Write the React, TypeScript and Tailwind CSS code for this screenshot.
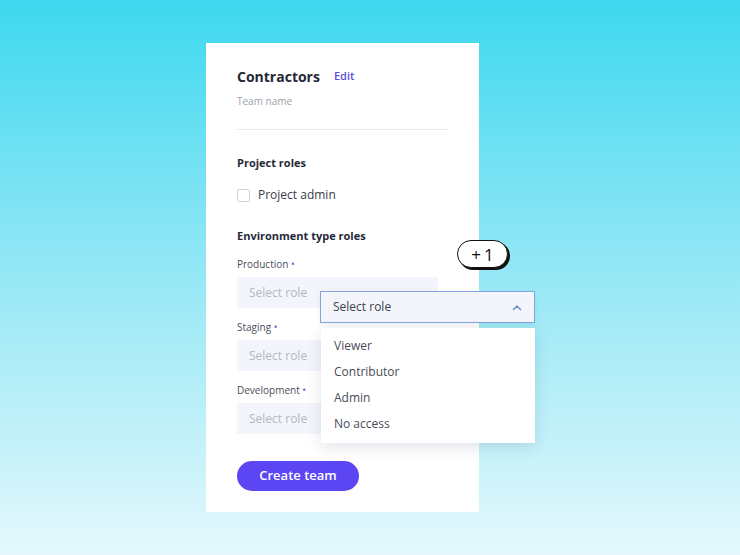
import React from "react";

const font = { fontFamily: '"Open Sans", "Noto Sans", sans-serif' };

function Field({ label }: { label: string }) {
  return (
    <div className="flex flex-col">
      <div className="text-[10px] leading-[14px] text-[#4b4d5a] font-medium">
        {label} <span className="text-[#6d5ce8]">•</span>
      </div>
      <div className="mt-[6px] h-[31px] w-[201px] bg-[#f3f5fa] flex items-center pl-[12px] text-[12px] text-[#b3b7c2]">
        Select role
      </div>
    </div>
  );
}

export default function App() {
  return (
    <div
      style={font}
      className="relative w-[740px] h-[555px] overflow-hidden bg-[linear-gradient(180deg,#3dd8ef_0%,#8ee6f5_45%,#e4f8fc_100%)]"
    >
      <div className="absolute left-[206px] top-[43px] w-[273px] h-[469px] bg-white pl-[31px] pr-[32px] pt-[25px]">
        <div className="flex items-center gap-[14px]">
          <span className="text-[14px] font-bold text-[#262838] leading-[18px]">Contractors</span>
          <span className="text-[11px] font-semibold text-[#5b4de0] leading-[14px] -mt-[3px]">Edit</span>
        </div>
        <div className="mt-[8px] text-[10px] text-[#9da1ab] leading-[14px]">Team name</div>
        <div className="mt-[21px] h-px w-[210px] bg-[#e7e9ee]" />
        <div className="mt-[26px] text-[11px] font-bold text-[#262838] leading-[14px]">Project roles</div>
        <div className="mt-[17px] flex items-center gap-[8px]">
          <div className="w-[13px] h-[13px] border border-[#cfd2d9] rounded-[2px] bg-white" />
          <span className="text-[12px] text-[#3a3c48] leading-[16px]">Project admin</span>
        </div>
        <div className="mt-[26px] text-[11px] font-bold text-[#262838] leading-[14px]">Environment type roles</div>
        <div className="mt-[14px] flex flex-col gap-[12px]">
          <Field label="Production" />
          <Field label="Staging" />
          <Field label="Development" />
        </div>
        <button className="mt-[27px] h-[30px] w-[122px] rounded-full bg-[#5c45f2] text-white text-[13px] font-semibold flex items-center justify-center">
          Create team
        </button>
      </div>

      {/* +1 badge */}
      <div className="absolute left-[457px] top-[240px] w-[51px] h-[28px] rounded-full bg-white border-[1.5px] border-[#111] shadow-[2px_2px_0_#111] flex items-center justify-center gap-[3px] text-[17px] text-[#111] font-medium leading-none">
        <span>+</span>
        <span>1</span>
      </div>

      {/* open select */}
      <div className="absolute left-[320px] top-[291px] w-[215px] h-[32px] bg-[#f3f5fa] border border-[#7fa6df] flex items-center justify-between pl-[12px] pr-[12px] shadow-[0_2px_6px_rgba(0,0,0,0.06)]">
        <span className="text-[12px] text-[#3f414d]">Select role</span>
        <svg width="10" height="7" viewBox="0 0 10 7" fill="none">
          <path d="M1.5 5.5L5 2L8.5 5.5" stroke="#6f8fc9" strokeWidth="1.6" strokeLinecap="round" strokeLinejoin="round" />
        </svg>
      </div>

      {/* menu */}
      <div className="absolute left-[321px] top-[328px] w-[214px] h-[115px] bg-white shadow-[0_4px_14px_rgba(40,60,90,0.14)] flex flex-col pt-[5px] pl-[13px]">
        {["Viewer", "Contributor", "Admin", "No access"].map((t) => (
          <div key={t} className="h-[26px] flex items-center text-[12px] text-[#4a4c57]">
            {t}
          </div>
        ))}
      </div>
    </div>
  );
}
